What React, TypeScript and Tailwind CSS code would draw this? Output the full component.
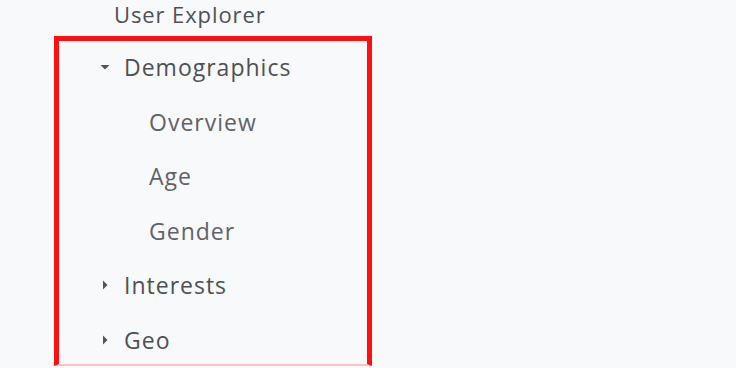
import React from "react";

type Item = { label: string; level: 0 | 1; caret?: "down" | "right" };

const ITEMS: Item[] = [
  { label: "Demographics", level: 0, caret: "down" },
  { label: "Overview", level: 1 },
  { label: "Age", level: 1 },
  { label: "Gender", level: 1 },
  { label: "Interests", level: 0, caret: "right" },
  { label: "Geo", level: 0, caret: "right" },
];

function Caret({ dir }: { dir: "down" | "right" }) {
  return (
    <svg width="12" height="12" viewBox="0 0 12 12" className="shrink-0">
      {dir === "down" ? (
        <path d="M1.5 4 L10.5 4 L6 8.5 Z" fill="#505458" />
      ) : (
        <path d="M4 1.5 L8.5 6 L4 10.5 Z" fill="#505458" />
      )}
    </svg>
  );
}

export default function App() {
  return (
    <div
      className="h-[368px] w-[736px] overflow-hidden bg-[#f8f9fa] pl-[54px]"
      style={{ fontFamily: "'Open Sans', Roboto, sans-serif" }}
    >
      <div className="flex h-[36px] items-start pl-[60px] text-[22px] leading-[29px] tracking-[0.9px] text-[#4d5155]">
        User Explorer
      </div>
      {/* highlighted section */}
      <div className="h-[330px] w-[318px] border-x-[5px] border-t-[5px] border-b-[2px] border-x-[#ff1010] border-t-[#ff1010] border-b-[#fbc4c4]">
        {ITEMS.map((it) => (
          <div
            key={it.label}
            className={`flex h-[54.5px] items-center pb-[2px] text-[23px] tracking-[1px] ${
              it.level === 0 ? "pl-[40px] text-[#4d5155]" : "pl-[90px] text-[#5f6368]"
            }`}
          >
            {it.caret && (
              <span className="mr-[13px] flex w-[12px] justify-center">
                <Caret dir={it.caret} />
              </span>
            )}
            {it.label}
          </div>
        ))}
      </div>
    </div>
  );
}
